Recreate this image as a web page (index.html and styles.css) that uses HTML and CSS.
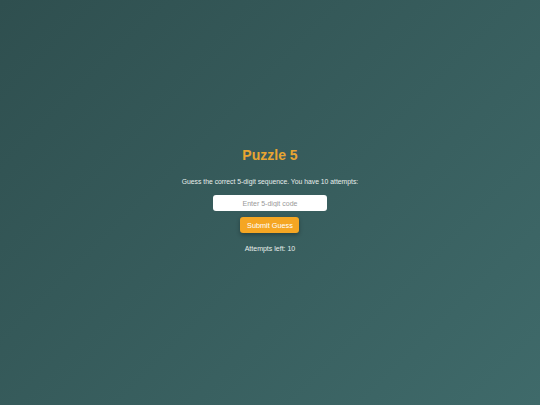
FILE: index.html
```html
<!DOCTYPE html>
<html lang="en">
<head>
<meta charset="utf-8">
<title>Puzzle 5</title>
<link rel="stylesheet" href="styles.css">
</head>
<body>
<main class="puzzle">
  <h1 class="title">Puzzle 5</h1>
  <p class="prompt">Guess the correct 5-digit sequence. You have 10 attempts:</p>
  <input class="code" type="text" placeholder="Enter 5-digit code">
  <button class="submit" type="button">Submit Guess</button>
  <p class="attempts">Attempts left: 10</p>
</main>
</body>
</html>
```

FILE: styles.css
```css
html, body {
  margin: 0;
  height: 100%;
}
body {
  background: linear-gradient(135deg, #2f4f4f 0%, #3f6a6a 100%);
  font-family: "Liberation Sans", Arial, sans-serif;
  color: #e8eeec;
  display: flex;
  align-items: center;
  justify-content: center;
}
.puzzle {
  display: flex;
  flex-direction: column;
  align-items: center;
  padding-bottom: 5px;
}
.title {
  margin: 0 0 15px;
  font-size: 14px;
  line-height: 16px;
  font-weight: bold;
  color: #e8a532;
}
.prompt {
  margin: 0 0 9px;
  font-size: 6.8px;
  line-height: 8px;
}
.code {
  width: 114px;
  height: 16px;
  box-sizing: border-box;
  border: none;
  border-radius: 3px;
  background: #fff;
  text-align: center;
  font-family: "Liberation Sans", Arial, sans-serif;
  font-size: 7px;
  padding: 0;
  margin: 0 0 6px;
}
.code::placeholder {
  color: #999;
}
.submit {
  width: 59px;
  height: 16px;
  border: none;
  border-radius: 3px;
  background: #f5a623;
  color: #fff;
  font-family: "Liberation Sans", Arial, sans-serif;
  font-size: 7.3px;
  padding: 0;
  box-shadow: 0 2px 4px rgba(0, 0, 0, 0.3);
  margin: 0 0 12px;
}
.attempts {
  margin: 0;
  font-size: 7px;
  line-height: 8px;
}
```
